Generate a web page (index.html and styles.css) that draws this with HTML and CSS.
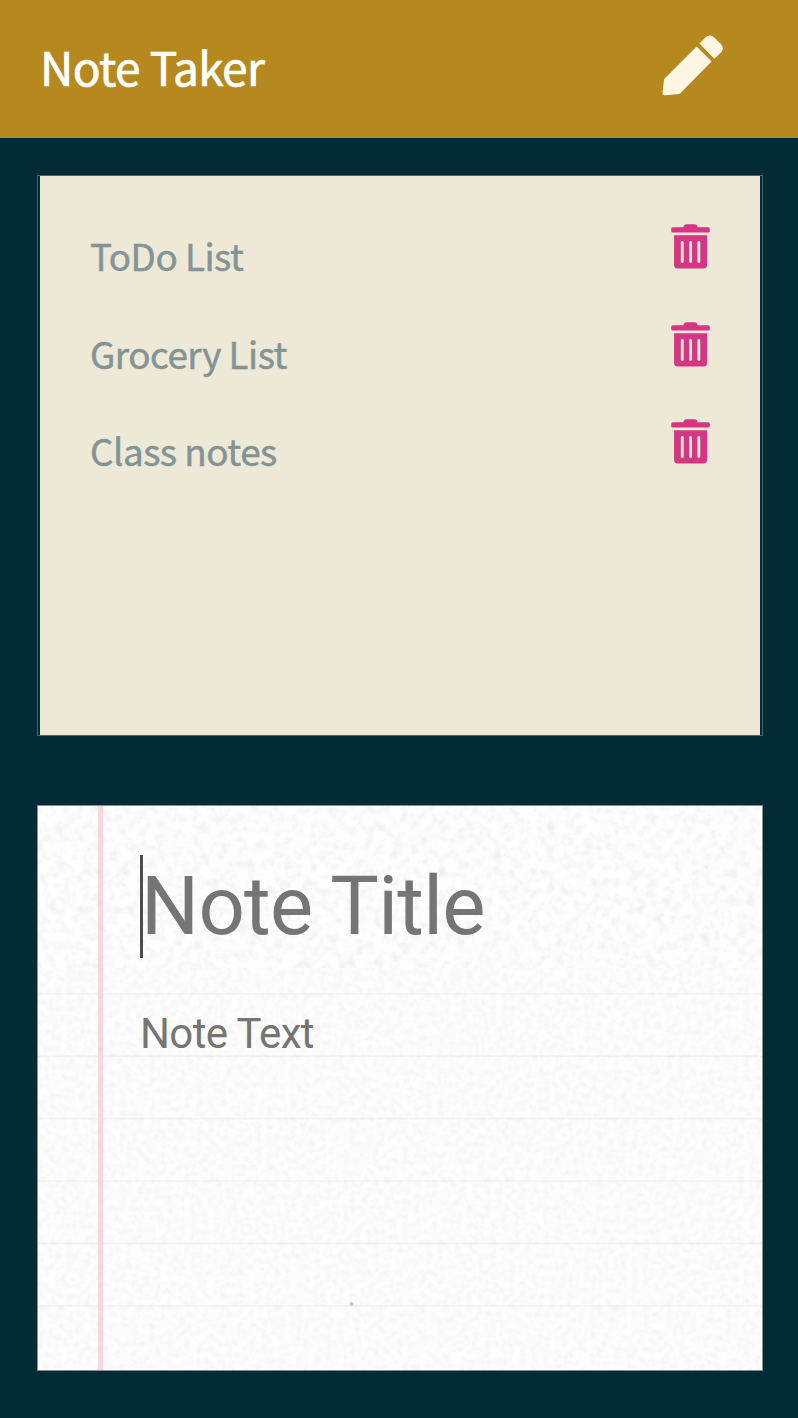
FILE: index.html
```html
<!DOCTYPE html>
<html lang="en">
<head>
<meta charset="utf-8">
<title>Note Taker</title>
<link rel="stylesheet" href="styles.css">
</head>
<body>
<svg class="defs" width="0" height="0" aria-hidden="true">
  <symbol id="trash" viewBox="0 0 39 45">
    <path d="M1.800 3.300H12.200Q13 .3 15 .3h9q2 0 2.800 3H37.200q1.600 0 1.600 1.600v2.100q0 1.600-1.600 1.600H1.800Q.2 8.600.2 7V4.900q0-1.600 1.600-1.600Z"/>
    <path fill-rule="evenodd" d="M3.100 11.300H36V41q0 3.600-3.600 3.600H6.700Q3.100 44.600 3.100 41Zm6.700 7.200v19a1.450 1.450 0 0 0 2.900 0v-19a1.450 1.450 0 0 0-2.900 0Zm8.300 0v19a1.450 1.450 0 0 0 2.900 0v-19a1.450 1.450 0 0 0-2.900 0Zm8.300 0v19a1.450 1.450 0 0 0 2.900 0v-19a1.450 1.450 0 0 0-2.900 0Z"/>
  </symbol>
</svg>
<header class="navbar">
  <h1 class="brand">Note Taker</h1>
  <svg class="pencil" viewBox="0 0 62 62" aria-label="New note">
    <path d="M34.600 11.500 49.600 26.500 18 58.400Q17.500 58.800 16.800 58.900L3 60.200Q.4 60.400.5 58L2 44.800Q2.100 44 2.600 43.500Z"/>
    <path d="M37.400 8.600 43.400 2.600Q47.800-1.700 52.200 2.400L58.800 8.900Q63 13.400 58.600 17.800L52.400 23.700Z"/>
  </svg>
</header>
<main class="content">
  <ul class="notes">
    <li class="note"><span>ToDo List</span><svg class="trash"><use href="#trash"/></svg></li>
    <li class="note"><span>Grocery List</span><svg class="trash"><use href="#trash"/></svg></li>
    <li class="note"><span>Class notes</span><svg class="trash"><use href="#trash"/></svg></li>
  </ul>
  <section class="paper">
    <svg class="grain" width="724" height="564" aria-hidden="true">
      <filter id="coarse" x="0" y="0" width="100%" height="100%">
        <feTurbulence type="fractalNoise" baseFrequency="0.11" numOctaves="4" seed="21"/>
        <feColorMatrix values="0 0 0 0 .4  0 0 0 0 .4  0 0 0 0 .4  .3 .15 0 0 -.205"/>
      </filter>
      <filter id="fine" x="0" y="0" width="100%" height="100%">
        <feTurbulence type="fractalNoise" baseFrequency="0.17" numOctaves="3" seed="3"/>
        <feColorMatrix values="0 0 0 0 .4  0 0 0 0 .4  0 0 0 0 .4  .15 .1 0 0 -.1"/>
      </filter>
      <rect width="724" height="162" filter="url(#coarse)"/>
      <rect y="162" width="724" height="402" filter="url(#fine)"/>
      <circle cx="313.500" cy="498" r="2" fill="#c9c9c9"/>
    </svg>
    <div class="fields">
      <div class="title-field"><span class="title">Note Title</span></div>
      <div class="text">Note Text</div>
    </div>
  </section>
</main>
</body>
</html>
```
FILE: styles.css
```css
* { box-sizing: border-box; }
body {
  margin: 0;
  min-height: 1418px;
  background: #032b35;
  font-family: "Noto Sans CJK JP", "Noto Sans", sans-serif;
}
.defs { position: absolute; }
.navbar {
  height: 138px;
  padding: 0 74px 0 40px;
  display: flex;
  justify-content: space-between;
  background: #b5891d;
  color: #fff;
}
.brand {
  margin: 0;
  font-size: 46px;
  font-weight: 400;
  letter-spacing: -.6px;
  line-height: 133px;
  white-space: nowrap;
  -webkit-text-stroke: .7px;
}
.pencil { width: 62px; height: 62px; margin-top: 35px; fill: #fdf6e3; }
.content {
  padding: 37px 35px 0 37px;
  display: flex;
  flex-direction: column;
  gap: 69px;
}
.notes {
  width: 726px;
  height: 561px;
  margin: 0;
  padding: 49px 49px 0 50px;
  list-style: none;
  border: 1px solid #48676a;
  background: linear-gradient(#eee8d6, #eee8d6) 2px 0 / 720px 100% no-repeat;
}
.note {
  height: 97.6px;
  padding: 0 3px 0 2px;
  display: flex;
  justify-content: space-between;
  color: #839496;
  font-size: 36.800px;
  font-weight: 400;
  letter-spacing: -.5px;
  line-height: 61px;
  -webkit-text-stroke: .5px;
}
.trash { width: 39px; height: 45px; margin-top: -1px; fill: #d33682; }
.paper {
  width: 726px;
  height: 566px;
  display: grid;
  border: 1px solid #82979b;
  background:
    linear-gradient(#f7dadd, #f7dadd) 60px 0 / 5px 100% no-repeat,
    repeating-linear-gradient(transparent 0 59.400px, #f0f0f0 61px, transparent 62.400px) 0 127px / 100% 400px no-repeat,
    #fdfdfd;
}
.grain, .fields { grid-area: 1 / 1; }
.fields { padding: 49px 0 0 102px; color: #757575; font-family: Roboto, sans-serif; }
.title-field { height: 103px; border-left: 3px solid #4d4d4d; line-height: 102px; }
.title { margin-left: -2px; font-size: 81.500px; letter-spacing: -.75px; white-space: nowrap; }
.text { margin-top: 45px; font-size: 42px; letter-spacing: -.6px; line-height: 62px; }
```
